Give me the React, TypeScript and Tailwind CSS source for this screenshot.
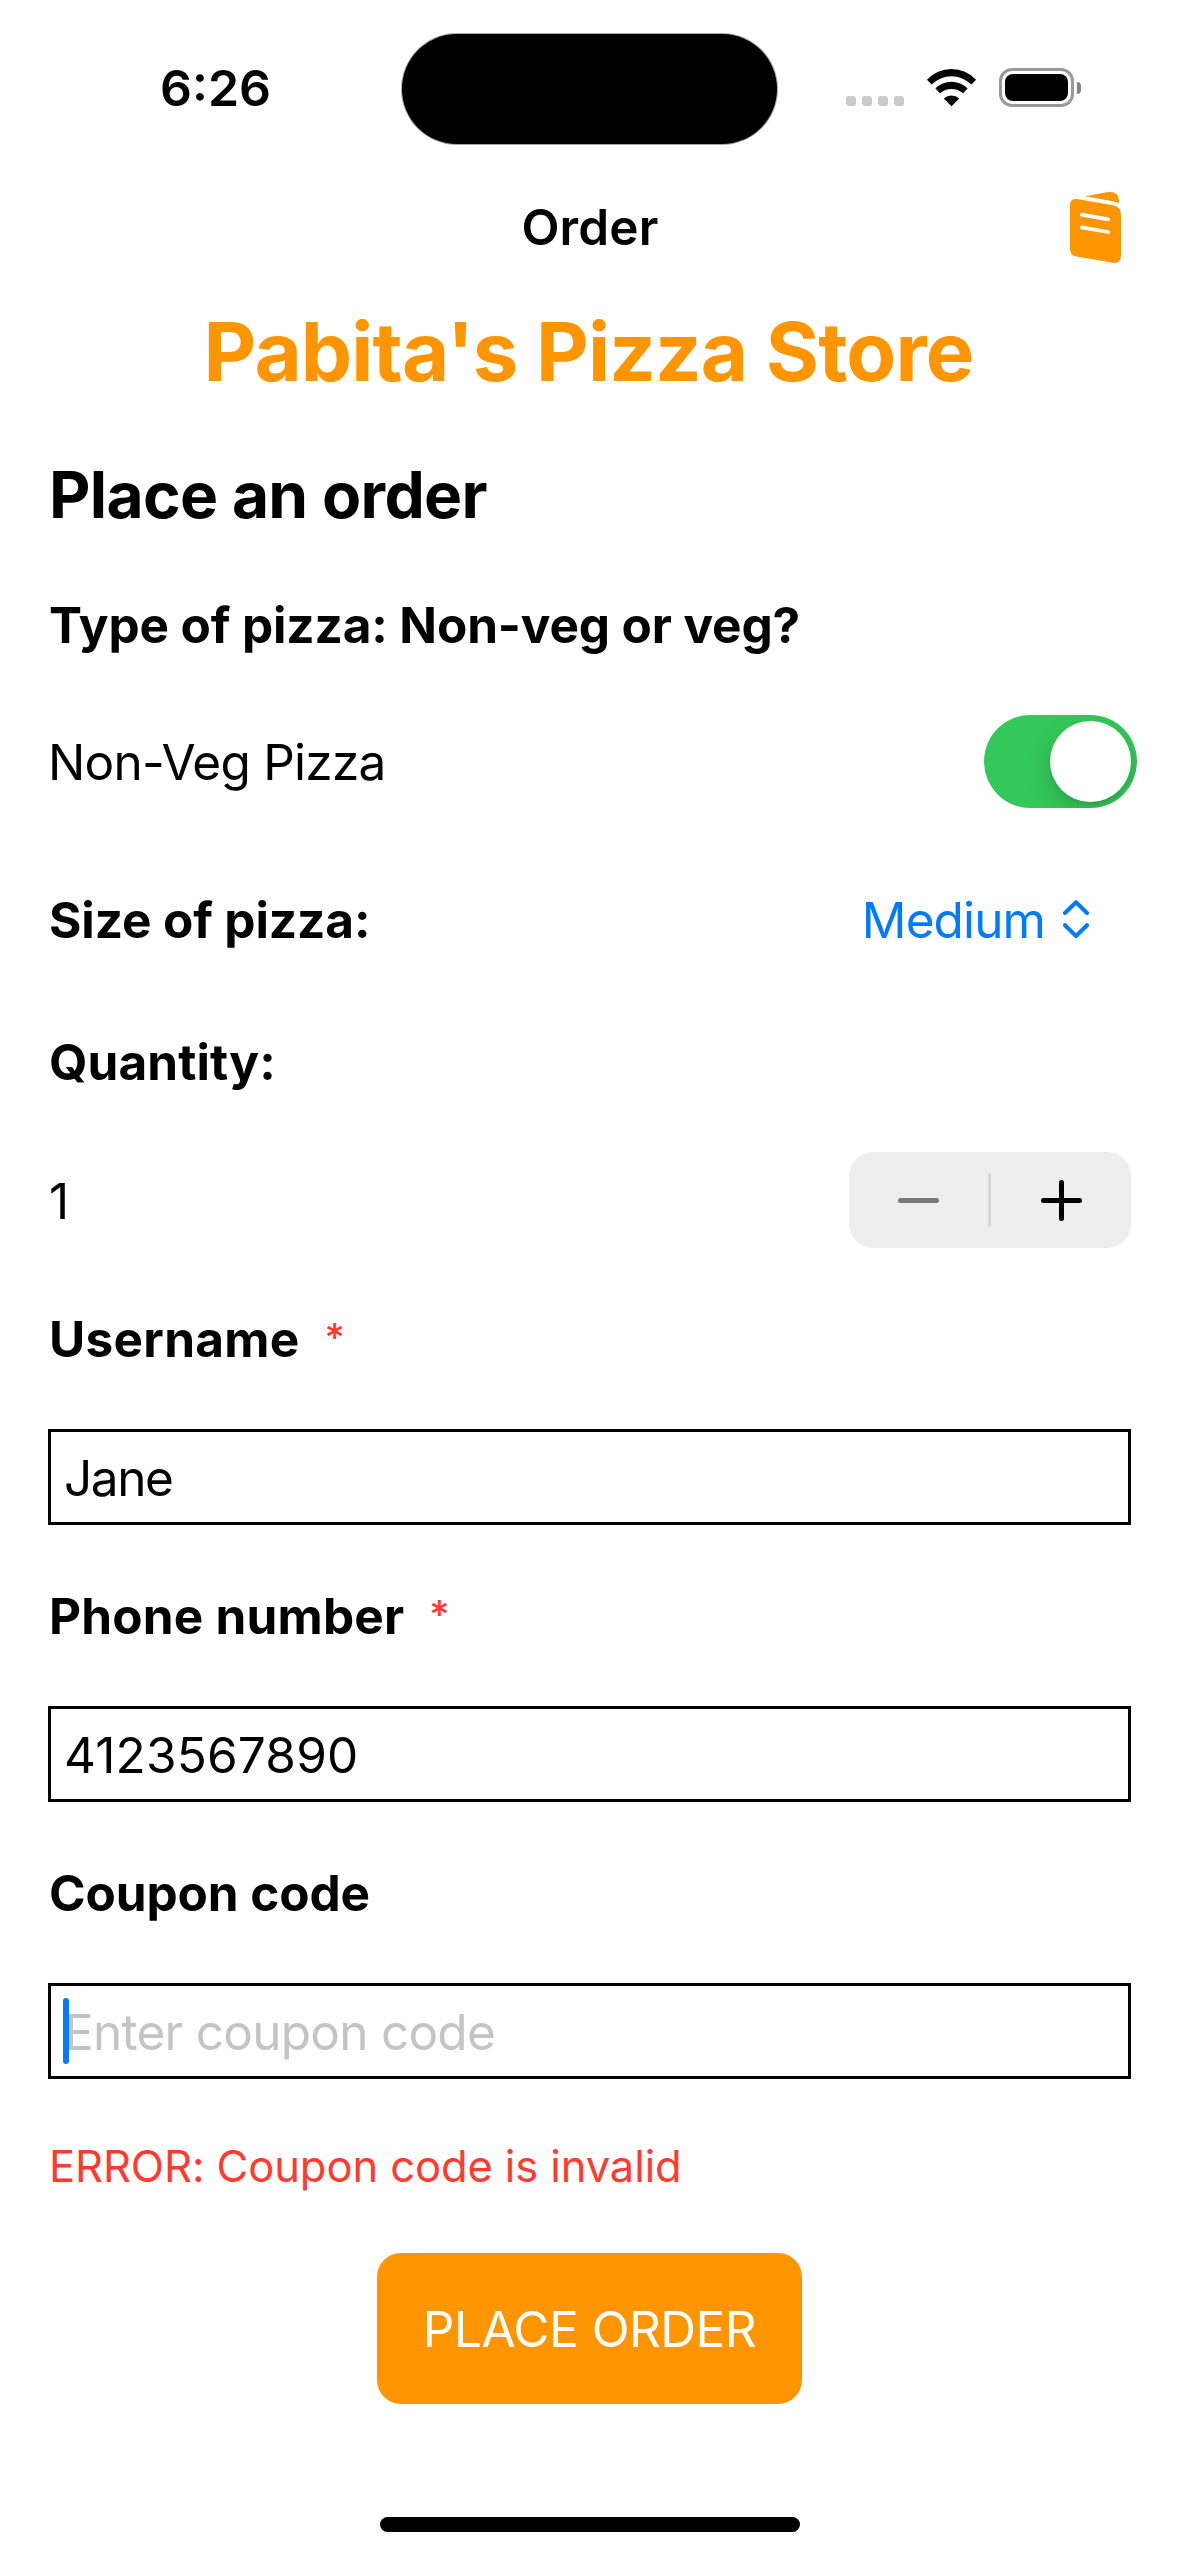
import type { ReactNode } from "react";

function WifiIcon() {
  return (
    <svg viewBox="0 0 51 39" className="h-[39px] w-[51px] fill-black">
      <path d="M1 11.8A33.2 33.2 0 0 1 50 11.8L45.4 16.6A28 28 0 0 0 5.6 16.6Z" />
      <path d="M9.4 20.6A22.6 22.6 0 0 1 41.6 20.6L37 25.3A17.4 17.4 0 0 0 14 25.3Z" />
      <path d="M17.8 30.4A11.4 11.4 0 0 1 33.2 30.4L25.5 38.2Z" />
    </svg>
  );
}

function Battery() {
  return (
    <div className="flex items-center gap-[3px]">
      <div className="h-[39px] w-[75px] rounded-[13px] border-[3px] border-[#999999] p-[3px]">
        <div className="h-full w-full rounded-[8px] bg-black" />
      </div>
      <div className="h-3 w-1 rounded-r-full bg-[#808080]" />
    </div>
  );
}

function StatusBar() {
  return (
    <header className="grid h-[177px] grid-cols-[402px_375px_1fr]">
      <div className="pt-[58px] pl-[160px] text-[50px] leading-[60px] font-semibold">6:26</div>
      <div className="mt-[34px] h-[110px] rounded-full bg-black ring-1 ring-black/35" />
      <div className="mt-[68px] flex h-[39px] items-start pl-[69px]">
        <div className="mt-7 flex gap-1.5">
          {[0, 1, 2, 3].map((dot) => (
            <div key={dot} className="size-2.5 rounded-[3px] bg-[#cbcbcb]" />
          ))}
        </div>
        <div className="mr-[22px] ml-[22px]">
          <WifiIcon />
        </div>
        <Battery />
      </div>
    </header>
  );
}

function MenuCardIcon() {
  return (
    <svg viewBox="0 0 51 72" className="h-[72px] w-[51px]">
      <path d="M15 5.2L37 1.3Q49 -0.3 49 10.5V12.2Q47 11 43 10.2Z" fill="#ff9500" />
      <path d="M0 14.5Q0 7.2 6.5 8L43 14.2Q51 16 51 24V64.5Q51 72.8 43 71.8L6.5 65.6Q0 64.6 0 58Z" fill="#ff9500" />
      <path d="M11.7 23.7L38.2 28.3M11.7 36.3L38.2 41" stroke="white" strokeWidth="3.8" strokeLinecap="round" />
    </svg>
  );
}

function FieldLabel({ children, required = false }: { children: ReactNode; required?: boolean }) {
  return (
    <div className="mt-[61px] flex h-[60px] items-start gap-[25px] pl-px">
      <label className="text-[49.5px] leading-[60px] font-bold">{children}</label>
      {required && <span className="mt-[5px] text-[39px] leading-[48px] font-medium text-[#ff3b30]">*</span>}
    </div>
  );
}

function FieldBox({ children }: { children: ReactNode }) {
  return (
    <div className="relative mt-[60px] h-24 border-[3px] border-black pt-4 pl-[13px] text-[49.5px] leading-[60px]">
      {children}
    </div>
  );
}

export default function App() {
  return (
    <div className="flex h-[2556px] w-[1179px] flex-col overflow-hidden bg-white font-[Inter,sans-serif] text-black">
      <StatusBar />

      <nav className="grid h-[125px] grid-cols-[1fr_auto_1fr]">
        <span className="col-start-2 mt-5 pl-px text-[49.5px] leading-[60px] font-semibold tracking-[0.15px]">Order</span>
        <button className="mt-3.5 mr-[58px] h-[72px] justify-self-end" aria-label="Menu">
          <MenuCardIcon />
        </button>
      </nav>

      <main className="flex flex-col px-12">
        <h1 className="self-center pr-0.5 text-[81.5px] leading-[99px] font-bold tracking-[-0.87px] whitespace-nowrap text-[#ff9500]">
          Pabita's Pizza Store
        </h1>
        <h2 className="mt-[55px] pl-px text-[64px] leading-[77px] font-bold tracking-[-0.67px]">Place an order</h2>

        <h3 className="mt-[62px] pl-px text-[49.5px] leading-[60px] font-bold tracking-[-0.13px]">
          Type of pizza: Non-veg or veg?
        </h3>
        <div className="mt-[60px] -mr-1.5 flex h-[93px] items-start justify-between">
          <span className="mt-[17px] text-[49.5px] leading-[60px] tracking-[-0.75px]">Non-Veg Pizza</span>
          <div className="flex h-[93px] w-[153px] justify-end overflow-hidden rounded-full bg-[#34c759] p-1.5">
            <div className="size-[81px] rounded-full bg-white shadow-[0_9px_24px_rgba(0,0,0,0.17),0_3px_3px_rgba(0,0,0,0.05)]" />
          </div>
        </div>

        <div className="mt-[82px] flex h-[60px] items-start justify-between">
          <h3 className="pl-px text-[49.5px] leading-[60px] font-bold tracking-[-0.1px]">Size of pizza:</h3>
          <div className="mr-[42px] flex items-start gap-[18px] text-[#007aff]">
            <span className="text-[49.5px] leading-[60px] tracking-[-0.89px]">Medium</span>
            <svg
              viewBox="0 0 26 38"
              className="mt-2.5 h-[38px] w-[26px] fill-none stroke-current stroke-[4]"
              strokeLinecap="round"
              strokeLinejoin="round"
            >
              <path d="M2 13L13 2.2L24 13M2 25.2L13 36L24 25.2" />
            </svg>
          </div>
        </div>

        <h3 className="mt-[82px] pl-px text-[49.5px] leading-[60px] font-bold tracking-[0.1px]">Quantity:</h3>
        <div className="mt-[60px] flex h-24 items-start justify-between">
          <span className="mt-[19px] pl-px text-[49.5px] leading-[60px]">1</span>
          <div className="flex h-24 w-[282px] items-center rounded-[24px] bg-[#eeeeee]">
            <div className="flex w-[139px] justify-center">
              <div className="h-[5px] w-[41px] rounded-full bg-[#7a7a7a]" />
            </div>
            <div className="h-[54px] w-[3px] rounded-full bg-[#d6d6d6]" />
            <div className="flex flex-1 justify-center">
              <svg viewBox="0 0 41 41" className="size-[41px] stroke-black stroke-[5]" strokeLinecap="round">
                <path d="M2.5 20.5H38.5M20.5 2.5V38.5" />
              </svg>
            </div>
          </div>
        </div>

        <FieldLabel required>
          <span className="tracking-[0.3px]">Username</span>
        </FieldLabel>
        <FieldBox>
          <span className="tracking-[-1.4px]">Jane</span>
        </FieldBox>

        <FieldLabel required>
          <span className="tracking-[0.2px]">Phone number</span>
        </FieldLabel>
        <FieldBox>
          <span className="tracking-[0.19px]">4123567890</span>
        </FieldBox>

        <FieldLabel>
          <span className="tracking-[-0.1px]">Coupon code</span>
        </FieldLabel>
        <FieldBox>
          <span className="tracking-[-0.74px] text-[#c4c4c6]">Enter coupon code</span>
          <div className="absolute top-3 left-3 h-[66px] w-1.5 rounded-full bg-[#007aff]" />
        </FieldBox>

        <p className="mt-[61px] pl-px text-[43.5px] leading-[52px] tracking-[-0.09px] text-[#ff3b30]">
          ERROR: Coupon code is invalid
        </p>
        <button className="mt-[61px] flex h-[151px] w-[425px] items-start justify-center self-center rounded-[24px] bg-[#ff9500] pt-[46px] text-[49.5px] leading-[60px] tracking-[-0.51px] whitespace-nowrap text-white">
          PLACE ORDER
        </button>
      </main>

      <footer className="mt-auto mb-6 h-[15px] w-[420px] self-center rounded-full bg-black" />
    </div>
  );
}
